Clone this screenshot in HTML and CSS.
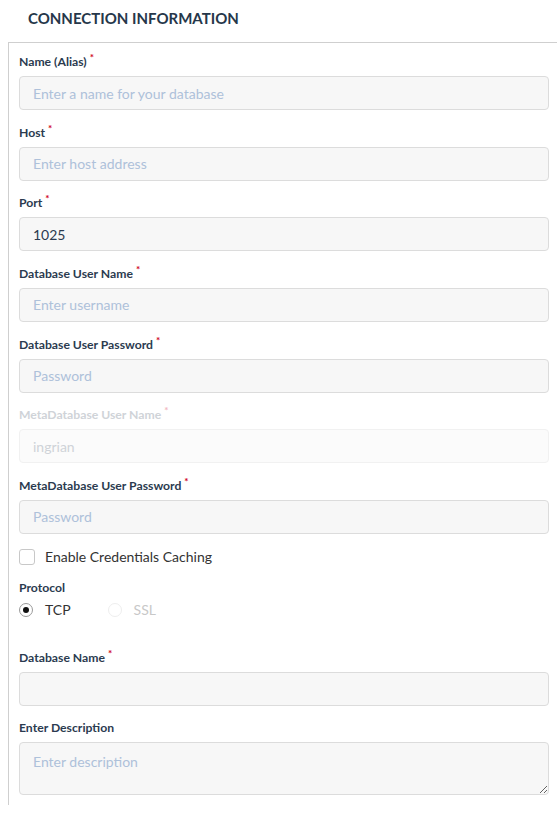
FILE: index.html
```html
<!DOCTYPE html>
<html>
<head>
<meta charset="utf-8">
<link rel="stylesheet" href="styles.css">
</head>
<body>
<h2 class="title">CONNECTION INFORMATION</h2>
<div class="panel">
  <div class="group">
    <label class="lbl">Name (Alias)<span class="req">*</span></label>
    <input class="field" type="text" placeholder="Enter a name for your database">
  </div>
  <div class="group">
    <label class="lbl">Host<span class="req">*</span></label>
    <input class="field" type="text" placeholder="Enter host address">
  </div>
  <div class="group">
    <label class="lbl">Port<span class="req">*</span></label>
    <input class="field" type="text" value="1025">
  </div>
  <div class="group">
    <label class="lbl">Database User Name<span class="req">*</span></label>
    <input class="field" type="text" placeholder="Enter username">
  </div>
  <div class="group">
    <label class="lbl">Database User Password<span class="req">*</span></label>
    <input class="field" type="password" placeholder="Password">
  </div>
  <div class="group disabled">
    <label class="lbl">MetaDatabase User Name<span class="req">*</span></label>
    <input class="field" type="text" value="ingrian" disabled>
  </div>
  <div class="group">
    <label class="lbl">MetaDatabase User Password<span class="req">*</span></label>
    <input class="field" type="password" placeholder="Password">
  </div>
  <div class="check-row">
    <span class="checkbox"></span>
    <span class="check-text">Enable Credentials Caching</span>
  </div>
  <div class="proto">
    <div class="lbl">Protocol</div>
    <div class="radios">
      <span class="radio-item"><span class="radio on"></span><span class="radio-text">TCP</span></span>
      <span class="radio-item off"><span class="radio"></span><span class="radio-text">SSL</span></span>
    </div>
  </div>
  <div class="group">
    <label class="lbl">Database Name<span class="req">*</span></label>
    <input class="field" type="text">
  </div>
  <div class="group last">
    <label class="lbl">Enter Description</label>
    <textarea class="field area" placeholder="Enter description"></textarea>
  </div>
</div>
</body>
</html>
```
FILE: styles.css
```css
html, body {
  margin: 0;
  padding: 0;
  background: #fff;
  font-family: Lato, "Open Sans", sans-serif;
}
.title {
  margin: 0;
  padding: 9px 0 0 28px;
  height: 42px;
  box-sizing: border-box;
  font-size: 15px;
  font-weight: 700;
  line-height: 18px;
  color: #26374a;
  letter-spacing: 0;
}
.panel {
  margin-left: 8px;
  border-left: 1px solid #cfcfcf;
  border-top: 1px solid #cfcfcf;
  padding: 11px 8px 10px 10px;
}
.group {
  display: flex;
  flex-direction: column;
  margin-bottom: 14.67px;
}
.group.last {
  margin-bottom: 0;
}
.lbl {
  font-size: 12.2px;
  font-weight: 700;
  line-height: 16px;
  color: #2b3b4f;
  margin-bottom: 6px;
  display: block;
}
.req {
  color: #d0021b;
  font-size: 10px;
  position: relative;
  top: -5px;
  margin-left: 3px;
}
.field {
  box-sizing: border-box;
  height: 34px;
  width: 100%;
  border: 1px solid #dcdcdc;
  border-radius: 4px;
  background: #f7f7f7;
  padding: 0 13px;
  font-family: Lato, "Open Sans", sans-serif;
  font-size: 14px;
  color: #2b3b4f;
  outline: none;
  margin: 0;
}
.field::placeholder {
  color: #aec1da;
  opacity: 1;
}
.disabled .lbl {
  color: #cfd3d8;
}
.disabled .req {
  color: #f2b8c0;
}
.disabled .field {
  background: #fbfbfb;
  border-color: #f1f1f1;
  color: #cfd3d8;
}
.area {
  height: 53px;
  padding-top: 10px;
  resize: vertical;
  display: block;
}
.check-row {
  display: flex;
  align-items: center;
  height: 18px;
  margin-top: -1px;
  margin-bottom: 14px;
}
.checkbox {
  width: 16px;
  height: 16px;
  box-sizing: border-box;
  border: 1px solid #c8c8c8;
  border-radius: 3px;
  background: #fff;
  margin-right: 10px;
}
.check-text {
  font-size: 14px;
  color: #333;
}
.proto {
  margin-bottom: 30px;
}
.proto .lbl {
  margin-bottom: 4px;
}
.radios {
  display: flex;
  align-items: center;
  height: 20px;
}
.radio-item {
  display: flex;
  align-items: center;
  margin-right: 37px;
}
.radio {
  width: 14px;
  height: 14px;
  box-sizing: border-box;
  border: 1px solid #9a9a9a;
  border-radius: 50%;
  margin-right: 12px;
  position: relative;
  background: #fff;
}
.radio.on::after {
  content: "";
  position: absolute;
  left: 3px;
  top: 3px;
  width: 6px;
  height: 6px;
  border-radius: 50%;
  background: #111;
}
.radio-text {
  font-size: 14px;
  color: #333;
}
.radio-item.off .radio {
  border-color: #eeeeee;
}
.radio-item.off .radio-text {
  color: #c8c8c8;
}
```
